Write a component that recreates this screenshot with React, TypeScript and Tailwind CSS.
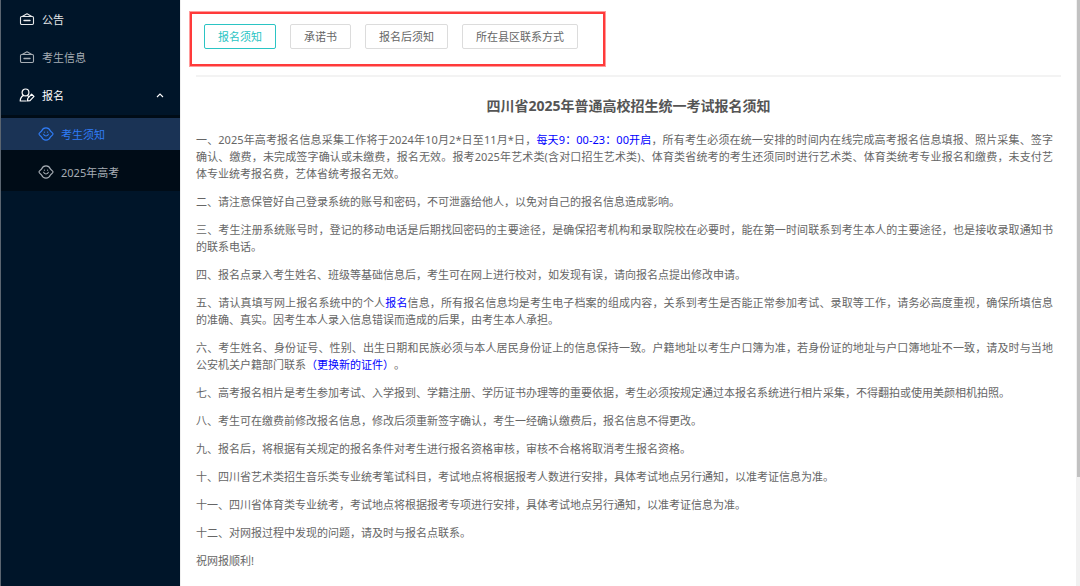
import { useState } from "react";
import type { ReactNode } from "react";
import clsx from "clsx";

const tabs = ["报名须知", "承诺书", "报名后须知", "所在县区联系方式"];

function Mark({ children }: { children: ReactNode }) {
  return <span className="text-[#0000ff]">{children}</span>;
}

// keeps a word on one line
function Word({ children }: { children: ReactNode }) {
  return <span className="whitespace-nowrap">{children}</span>;
}

const notices: ReactNode[] = [
  <>
    一、2025年高考报名信息采集工作将于2024年10月2*日至11月*日，<Mark>每天9：00-23：00开启</Mark>，所有考生必须在统一安排的时间内在线完成高考报名信息填报、照片采集、签字<Word>确认</Word>、缴费，未完成签字确认或未缴费，报名无效。报考2025年艺术类(含对口招生艺术类)、体育类省统考的考生还须同时进行艺术类、体育类统考专业报名和缴费，未支付艺<Word>体专业</Word>统考报名费，艺体省统考报名无效。
  </>,
  "二、请注意保管好自己登录系统的账号和密码，不可泄露给他人，以免对自己的报名信息造成影响。",
  "三、考生注册系统账号时，登记的移动电话是后期找回密码的主要途径，是确保招考机构和录取院校在必要时，能在第一时间联系到考生本人的主要途径，也是接收录取通知书的联系电话。",
  "四、报名点录入考生姓名、班级等基础信息后，考生可在网上进行校对，如发现有误，请向报名点提出修改申请。",
  <>
    五、请认真填写网上报名系统中的个人<Mark>报名</Mark>信息，所有报名信息均是考生电子档案的组成内容，关系到考生是否能正常参加考试、录取等工作，请务必高度重视，确保所填信息的准确、真实。因考生本人录入信息错误而造成的后果，由考生本人承担。
  </>,
  <>
    六、考生姓名、身份证号、性别、出生日期和民族必须与本人居民身份证上的信息保持一致。户籍地址以考生户口簿为准，若身份证的地址与户口簿地址不一致，请及时与当地公安机关户籍部门联系<Mark>（更换新的证件）</Mark>。
  </>,
  "七、高考报名相片是考生参加考试、入学报到、学籍注册、学历证书办理等的重要依据，考生必须按规定通过本报名系统进行相片采集，不得翻拍或使用美颜相机拍照。",
  "八、考生可在缴费前修改报名信息，修改后须重新签字确认，考生一经确认缴费后，报名信息不得更改。",
  "九、报名后，将根据有关规定的报名条件对考生进行报名资格审核，审核不合格将取消考生报名资格。",
  "十、四川省艺术类招生音乐类专业统考笔试科目，考试地点将根据报考人数进行安排，具体考试地点另行通知，以准考证信息为准。",
  "十一、四川省体育类专业统考，考试地点将根据报考专项进行安排，具体考试地点另行通知，以准考证信息为准。",
  "十二、对网报过程中发现的问题，请及时与报名点联系。",
  "祝网报顺利!",
];

function BoardIcon() {
  return (
    <svg className="h-4 w-4 shrink-0" viewBox="0 0 16 16" fill="none" stroke="currentColor" strokeWidth="1.1" strokeLinejoin="round" strokeLinecap="round">
      <rect x="1.5" y="5.5" width="13" height="8" rx="1.2" />
      <path d="M3.6 5.3 8 2.8l4.4 2.5" />
      <path d="M5 9.5h6" strokeWidth="1.4" />
    </svg>
  );
}

function UserEditIcon() {
  return (
    <svg className="h-4 w-4 shrink-0" viewBox="0 0 16 16" fill="none" stroke="currentColor" strokeWidth="1.2" strokeLinejoin="round" strokeLinecap="round">
      <circle cx="6.5" cy="5.4" r="3.4" />
      <path d="M4.6 8.4C2.6 9.4 1.3 11.4 1.2 14h6" />
      <path d="M8.4 13.8l.4-2.4 3.8-4.2 2.4 2.2-4 4.2z" />
      <path d="M8.4 8.4l1 1" />
    </svg>
  );
}

function SmileIcon() {
  return (
    <svg className="h-4 w-4 shrink-0" viewBox="0 0 16 16" fill="none" stroke="currentColor" strokeWidth="1.1" strokeLinejoin="round" strokeLinecap="round">
      <path d="M1.4 7.2 3.6 5C4.3 3.2 6 1.9 8 1.9s3.7 1.3 4.4 3.1l2.2 2.2c.5.5.5 1.1 0 1.6L12.4 11c-.7 1.8-2.4 3.1-4.4 3.1S4.3 12.8 3.6 11L1.4 8.8c-.5-.5-.5-1.1 0-1.6z" />
      <path d="M5.6 8.2c.5 2.3 4.3 2.3 4.8 0" />
      <path d="M6.4 6v.2M9.6 6v.2" />
    </svg>
  );
}

export default function App() {
  const [tab, setTab] = useState(tabs[0]);
  const [open, setOpen] = useState(true);

  return (
    <div className="flex min-h-screen bg-white text-[11px] leading-[17px] [font-family:'Noto_Sans','Noto_Sans_CJK_SC',sans-serif] [text-spacing-trim:space-all]">
      <nav className="w-[180px] shrink-0 border-l border-[#5b6570] bg-[#001529] pt-[3px] text-[#a6adb4]">
        <div className="flex flex-col gap-[6px]">
          <a href="#notice" className="flex h-8 items-center gap-[7px] pl-[18px] text-[#e6e8ea]">
            <BoardIcon />
            公告
          </a>
          <a href="#info" className="flex h-8 items-center gap-[7px] pl-[18px]">
            <BoardIcon />
            考生信息
          </a>
          <button
            onClick={() => setOpen(!open)}
            className="flex h-8 items-center gap-[7px] pr-4 pl-[18px] text-white"
          >
            <UserEditIcon />
            报名
            <svg
              className={clsx("ml-auto h-2 w-2", !open && "rotate-180")}
              viewBox="0 0 8 8"
              fill="none"
              stroke="currentColor"
              strokeWidth="1.1"
            >
              <path d="M1 6 4 3l3 3" />
            </svg>
          </button>
        </div>
        {open && (
          <div className="mt-1 flex flex-col gap-[6px] bg-[#000c17] py-[3px]">
            <a href="#rules" className="flex h-8 items-center gap-[7px] bg-[#1a3355] pl-[37px] text-[#2f7cf6]">
              <SmileIcon />
              考生须知
            </a>
            <a href="#gaokao" className="flex h-8 items-center gap-[7px] pl-[37px]">
              <SmileIcon />
              2025年高考
            </a>
          </div>
        )}
      </nav>

      <main className="min-w-0 flex-1 border-l border-[#f0f0f0] pt-3 pr-[15px] pl-[9px]">
        <div className="flex w-fit gap-[14px] border-2 border-[#ff3a3a] pt-[10px] pr-[25px] pb-[15px] pl-3 ring-1 ring-[#ff3a3a]/50">
          {tabs.map((t) => (
            <button
              key={t}
              onClick={() => setTab(t)}
              className={clsx(
                "h-[25px] rounded-[2px] border px-[13px]",
                t === tab ? "border-[#2bc4c4] text-[#2bc4c4]" : "border-[#dcdcdc] text-[#666]"
              )}
            >
              {t}
            </button>
          ))}
        </div>

        <article className="ml-[6px] mt-[9px] border-t-2 border-[#f3f3f3] text-[#666]">
          <h1 className="mt-5 mb-4 text-center text-sm leading-[18px] font-bold text-[#555]">
            四川省2025年普通高校招生统一考试报名须知
          </h1>
          <div className="flex flex-col gap-[11px] pr-2 text-justify">
            {notices.map((n, i) => (
              <p key={i}>{n}</p>
            ))}
          </div>
        </article>
      </main>

      {/* scroll track */}
      <div className="flex w-1 shrink-0 flex-col items-end bg-[#f1f1f1]">
        <div className="h-[477px] w-[3px] bg-[#c1c1c1]" />
      </div>
    </div>
  );
}
